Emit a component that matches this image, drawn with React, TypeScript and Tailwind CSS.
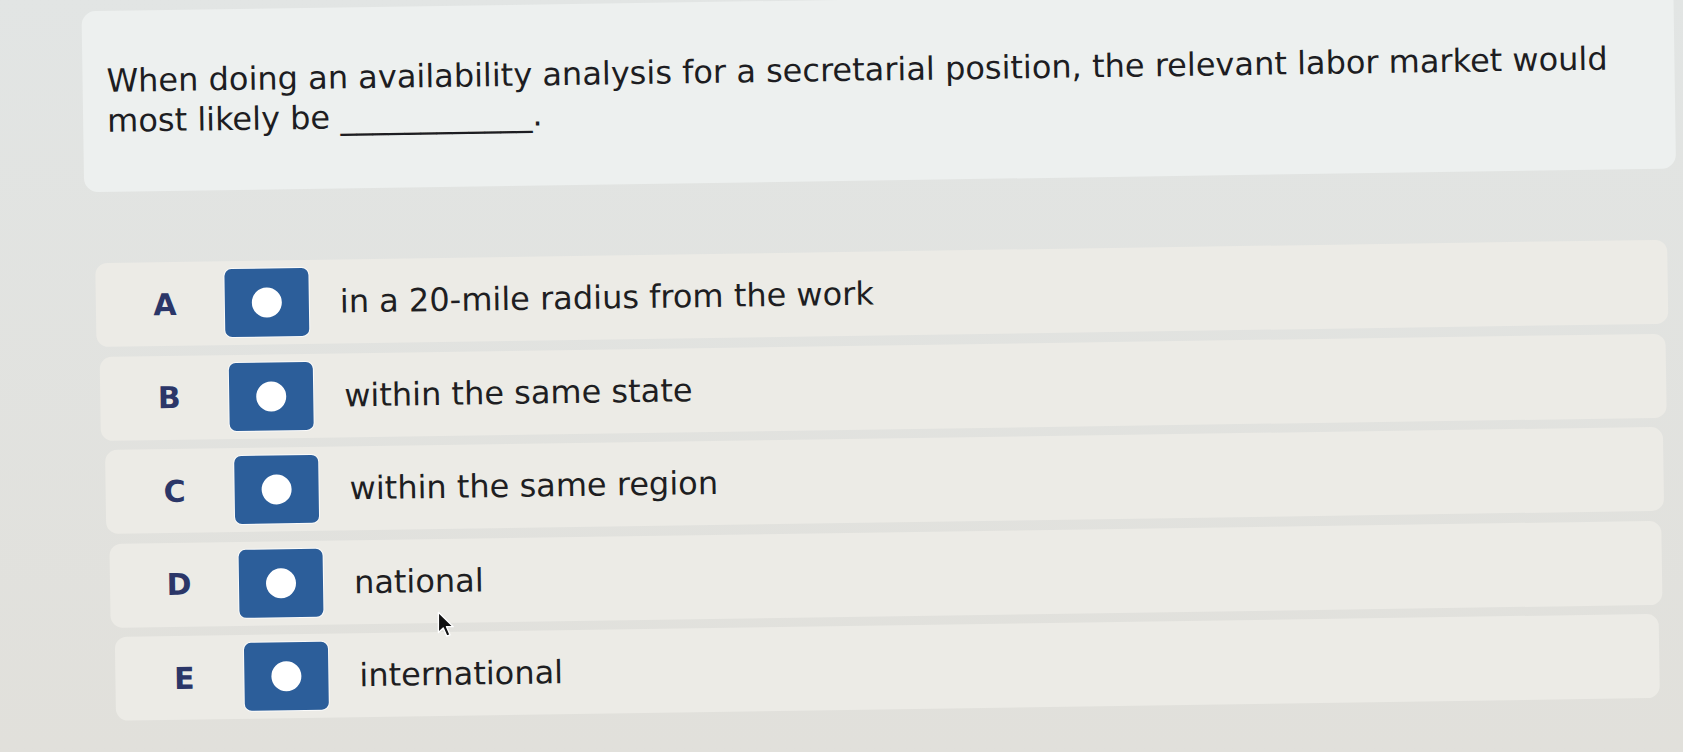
const options = [
  { letter: 'A', text: 'in a 20-mile radius from the work', inset: 'ml-[97px] mr-[14px]' },
  { letter: 'B', text: 'within the same state', inset: 'ml-[100px] mr-[17px]' },
  { letter: 'C', text: 'within the same region', inset: 'ml-[104px] mr-[21px]' },
  { letter: 'D', text: 'national', inset: 'ml-[107px] mr-[24px]' },
  { letter: 'E', text: 'international', inset: 'ml-[111px] mr-[28px]' },
];

function Cursor() {
  return (
    <svg width="19" height="27" viewBox="0 0 14 20" className="absolute left-[437px] top-[611px]">
      <path d="M1 1 L1 16 L4.6 12.6 L7.2 18.6 L9.6 17.6 L7 11.6 L12 11.6 Z" fill="#111" stroke="#fff" strokeWidth="1" strokeLinejoin="round" />
    </svg>
  );
}

export default function App() {
  return (
    <div className="relative h-[752px] w-[1683px] overflow-hidden bg-gradient-to-b from-[#e2e5e4] to-[#e1e0db] font-['DejaVu_Sans',sans-serif]">
      {/* the photo is a little tilted */}
      <div className="h-full w-full -rotate-[0.85deg]">
        {/* question */}
        <div className="ml-[87px] mr-[4px] h-[181px] rounded-[14px] bg-[#edf0ef] pl-[24px] pr-[40px] pt-[50px]">
          <p className="text-[32px] leading-[40px] text-[#1d1d22]">
            When doing an availability analysis for a secretarial position, the relevant labor market would most likely be ____________.
          </p>
        </div>

        {/* options */}
        <div className="mt-[71px] flex flex-col gap-[9.5px]">
          {options.map((o) => (
            <div key={o.letter} className={`flex h-[84px] items-center rounded-[12px] bg-[#ecebe6] ${o.inset}`}>
              <span className="ml-[9px] w-[120px] text-center text-[30px] font-bold text-[#2b3668]">{o.letter}</span>
              <div className="flex h-[68px] w-[84px] items-center justify-center rounded-[7px] bg-[#2c5e9a] ring-1 ring-white/80">
                <div className="h-[30px] w-[30px] rounded-full bg-white" />
              </div>
              <span className="ml-[31px] text-[32px] text-[#1e1e22]">{o.text}</span>
            </div>
          ))}
        </div>
      </div>

      <Cursor />
    </div>
  );
}
